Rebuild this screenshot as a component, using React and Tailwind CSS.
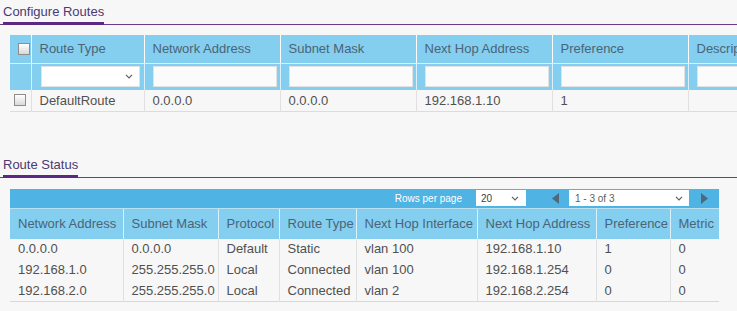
import React from 'react'

const HEAD = 'bg-[#84ceef] text-[#4b6477] font-normal text-left pl-[8px] border-r border-white/70'

function Box() {
  return <span className="block mx-auto w-[12px] h-[12px] border border-[#8d8d8d] bg-linear-to-b from-white to-[#d9d9d9]" />
}

function Chevron() {
  return (
    <svg width="8" height="5" viewBox="0 0 8 5" className="shrink-0">
      <path d="M1 0.8 L4 3.8 L7 0.8" fill="none" stroke="#606060" strokeWidth="1.2" />
    </svg>
  )
}

function Arrow({ dir }) {
  return (
    <svg width="7" height="11" viewBox="0 0 7 11" className="shrink-0">
      {dir === 'left'
        ? <polygon points="7,0 7,11 0,5.5" fill="#4d697d" />
        : <polygon points="0,0 0,11 7,5.5" fill="#4d697d" />}
    </svg>
  )
}

function Title({ children }) {
  return (
    <div className="flex border-b border-[#6a3c8c]">
      <span className="ml-[3px] -mb-px pt-[4px] pb-[3px] leading-[15px] text-[13px] text-[#4a3a72] border-b-[3px] border-[#5a2a82]">
        {children}
      </span>
    </div>
  )
}

export default function App() {
  const cfgCols = [
    ['Route Type', 113],
    ['Network Address', 136],
    ['Subnet Mask', 136],
    ['Next Hop Address', 136],
    ['Preference', 136],
    ['Description', 136],
  ]

  const statusCols = [
    ['Network Address', 113],
    ['Subnet Mask', 95],
    ['Protocol', 61],
    ['Route Type', 77],
    ['Next Hop Interface', 121],
    ['Next Hop Address', 119],
    ['Preference', 74],
    ['Metric', 49],
  ]

  const routes = [
    ['0.0.0.0', '0.0.0.0', 'Default', 'Static', 'vlan 100', '192.168.1.10', '1', '0'],
    ['192.168.1.0', '255.255.255.0', 'Local', 'Connected', 'vlan 100', '192.168.1.254', '0', '0'],
    ['192.168.2.0', '255.255.255.0', 'Local', 'Connected', 'vlan 2', '192.168.2.254', '0', '0'],
  ]

  return (
    <div className="w-[737px] h-[311px] overflow-hidden bg-[#f7f7f7] font-['Liberation_Sans',Arial,sans-serif] text-[13px] text-[#505050]">
      {/* Configure Routes */}
      <Title>Configure Routes</Title>
      <table className="table-fixed border-collapse ml-[10px] mt-[10px] w-[814px]">
        <colgroup>
          <col className="w-[21px]" />
          {cfgCols.map(([n, w]) => <col key={n} style={{ width: w }} />)}
        </colgroup>
        <thead>
          <tr className="h-[28px] border-b border-white/70">
            <th className={HEAD + ' pl-0'}><Box /></th>
            {cfgCols.map(([n]) => <th key={n} className={HEAD + ' whitespace-nowrap overflow-hidden'}>{n}</th>)}
          </tr>
          <tr className="h-[27px]">
            <th className="bg-[#84ceef] border-r border-white/70" />
            <th className="bg-[#84ceef] border-r border-white/70 pl-[9px] pr-[4px]">
              <div className="h-[21px] bg-white border border-[#e2e2e2] flex items-center justify-end pr-[6px]">
                <Chevron />
              </div>
            </th>
            {cfgCols.slice(1).map(([n]) => (
              <th key={n} className="bg-[#84ceef] border-r border-white/70 pl-[8px] pr-[3px]">
                <div className="h-[21px] bg-[#fbfbfb] border border-[#e2e2e2]" />
              </th>
            ))}
          </tr>
        </thead>
        <tbody>
          <tr className="h-[21px] border-b border-[#dcdcdc]">
            <td className="border-r border-[#e0e0e0]"><Box /></td>
            {['DefaultRoute', '0.0.0.0', '0.0.0.0', '192.168.1.10', '1', ''].map((v, i) => (
              <td key={i} className="pl-[8px] border-r border-[#e0e0e0] whitespace-nowrap">{v}</td>
            ))}
          </tr>
        </tbody>
      </table>

      {/* Route Status */}
      <div className="mt-[41px]">
        <Title>Route Status</Title>
      </div>
      <div className="ml-[10px] mt-[11px] w-[709px]">
        <div className="h-[20px] bg-[#4fb3e4] border-b border-white/60 flex items-center justify-end pr-[11px] text-[10px]">
          <span className="text-white mr-[14px]">Rows per page</span>
          <div className="w-[50px] h-[16px] bg-white flex items-center justify-between pl-[5px] pr-[7px] text-[#404040]">
            <span>20</span>
            <Chevron />
          </div>
          <div className="ml-[26px] mr-[10px]"><Arrow dir="left" /></div>
          <div className="w-[120px] h-[16px] bg-white flex items-center justify-between pl-[6px] pr-[6px] text-[#606060]">
            <span>1 - 3 of 3</span>
            <Chevron />
          </div>
          <div className="ml-[12px]"><Arrow dir="right" /></div>
        </div>
        <table className="table-fixed border-collapse w-full">
          <colgroup>
            {statusCols.map(([n, w]) => <col key={n} style={{ width: w }} />)}
          </colgroup>
          <thead>
            <tr className="h-[30px]">
              {statusCols.map(([n]) => <th key={n} className={HEAD + ' whitespace-nowrap last:border-r-0'}>{n}</th>)}
            </tr>
          </thead>
          <tbody className="border-b border-[#d8d8d8]">
            {routes.map((r, i) => (
              <tr key={i} className="h-[21px]">
                {r.map((v, j) => (
                  <td key={j} className="pl-[8px] whitespace-nowrap border-r border-[#e0e0e0] last:border-r-0">{v}</td>
                ))}
              </tr>
            ))}
          </tbody>
        </table>
      </div>
    </div>
  )
}
